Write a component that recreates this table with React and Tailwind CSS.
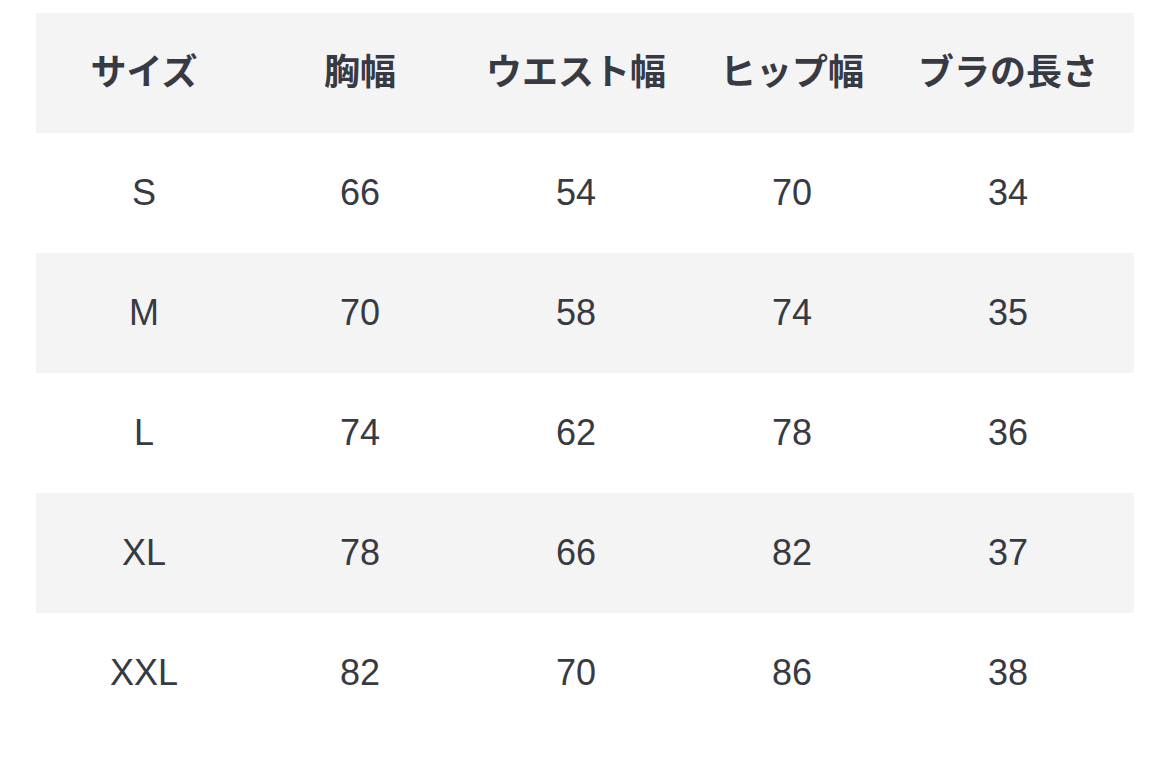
const headers = ['サイズ', '胸幅', 'ウエスト幅', 'ヒップ幅', 'ブラの長さ'];

const rows = [
  ['S', '66', '54', '70', '34'],
  ['M', '70', '58', '74', '35'],
  ['L', '74', '62', '78', '36'],
  ['XL', '78', '66', '82', '37'],
  ['XXL', '82', '70', '86', '38'],
];

function Row({ cells, shaded, bold }) {
  return (
    <div
      className={
        'grid h-[120px] grid-cols-[repeat(5,216px)] items-center ' +
        (shaded ? 'bg-[#f4f4f5]' : 'bg-white')
      }
    >
      {cells.map((c, i) => (
        <div
          key={i}
          className={'text-center text-[36px] leading-none ' + (bold ? 'font-bold' : 'font-normal')}
        >
          {c}
        </div>
      ))}
    </div>
  );
}

export default function App() {
  return (
    <div
      className="min-h-[764px] bg-white pt-[13px] text-[#383a43]"
      style={{ fontFamily: '"Liberation Sans", "Noto Sans CJK JP", sans-serif' }}
    >
      <div className="ml-[36px] w-[1098px]">
        <Row cells={headers} shaded bold />
        {rows.map((r, i) => (
          <Row key={r[0]} cells={r} shaded={i % 2 === 1} />
        ))}
      </div>
    </div>
  );
}
